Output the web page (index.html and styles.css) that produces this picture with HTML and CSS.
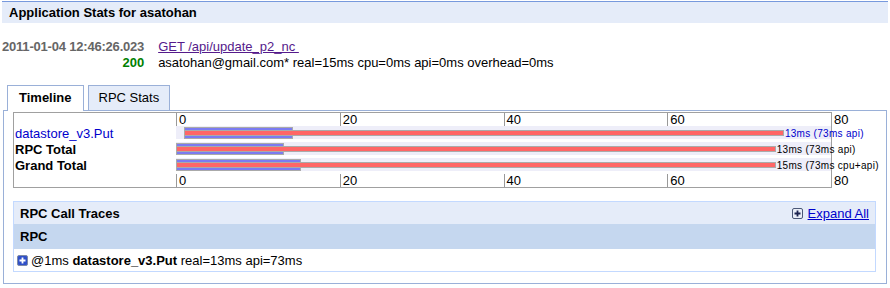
FILE: index.html
```html
<!DOCTYPE html>
<html lang="en">
<head>
  <meta charset="UTF-8">
  <meta name="viewport" content="width=device-width, initial-scale=1.0">
  <title>Application Stats</title>
  <link rel="stylesheet" href="styles.css">
</head>
<body>

<div class="page-title">Application Stats for asatohan</div>

<table class="request">
  <tr>
    <td class="req-time">2011-01-04 12:46:26.023</td>
    <td><a href="#" class="req-link">GET /api/update_p2_nc&nbsp;</a></td>
  </tr>
  <tr>
    <td class="req-status">200</td>
    <td>asatohan@gmail.com* real=15ms cpu=0ms api=0ms overhead=0ms</td>
  </tr>
</table>

<div class="tabs">
  <div class="tab selected">Timeline</div>
  <div class="tab">RPC Stats</div>
</div>

<div class="tab-panel">
  <div class="gantt">
    <div class="g-row axis-row">
      <div class="g-label"></div>
      <div class="g-chart">
        <span class="tick" style="left:0%">0</span>
        <span class="tick" style="left:25%">20</span>
        <span class="tick" style="left:50%">40</span>
        <span class="tick" style="left:75%">60</span>
        <span class="tick last" style="left:100%">80</span>
      </div>
    </div>

    <div class="g-row">
      <div class="g-label"><span class="rpc-name">datastore_v3.Put</span></div>
      <div class="g-chart">
        <div class="track">
          <div class="bar-real" style="left:1.25%;width:16.25%"></div>
          <div class="bar-api" style="left:1.25%;width:91.25%"></div>
          <span class="bar-text blue" style="left:92.5%">13ms (73ms api)</span>
        </div>
      </div>
    </div>

    <div class="g-row">
      <div class="g-label total">RPC Total</div>
      <div class="g-chart">
        <div class="track">
          <div class="bar-real" style="left:0%;width:16.25%"></div>
          <div class="bar-api" style="left:0%;width:91.25%"></div>
          <span class="bar-text" style="left:91.25%">13ms (73ms api)</span>
        </div>
      </div>
    </div>

    <div class="g-row">
      <div class="g-label total">Grand Total</div>
      <div class="g-chart">
        <div class="track">
          <div class="bar-real" style="left:0%;width:18.75%"></div>
          <div class="bar-api" style="left:0%;width:91.25%"></div>
          <span class="bar-text" style="left:91.25%">15ms (73ms cpu+api)</span>
        </div>
      </div>
    </div>

    <div class="g-row axis-row">
      <div class="g-label"></div>
      <div class="g-chart">
        <span class="tick" style="left:0%">0</span>
        <span class="tick" style="left:25%">20</span>
        <span class="tick" style="left:50%">40</span>
        <span class="tick" style="left:75%">60</span>
        <span class="tick last" style="left:100%">80</span>
      </div>
    </div>
  </div>

  <div class="traces">
    <div class="traces-head">
      <span>RPC Call Traces</span>
      <a href="#" class="expand-all">
        <svg class="plus-icon" width="11" height="11" viewBox="0 0 11 11">
          <rect x="0.5" y="0.5" width="10" height="10" rx="1.5" fill="#e9eef8" stroke="#4b5877"/>
          <path d="M2.5 5.5h6M5.5 2.5v6" stroke="#1c2450" stroke-width="1.8"/>
        </svg>
        <span>Expand All</span>
      </a>
    </div>
    <div class="traces-cols">RPC</div>
    <div class="trace-row">
      <svg class="plus-icon" width="11" height="11" viewBox="0 0 11 11">
        <rect x="0.5" y="0.5" width="10" height="10" rx="1.5" fill="#3050c8" stroke="#7d8aa8"/>
        <path d="M2.5 5.5h6M5.5 2.5v6" stroke="#fff" stroke-width="1.8"/>
      </svg>
      <span>@1ms <b>datastore_v3.Put</b> real=13ms api=73ms</span>
    </div>
  </div>
</div>

</body>
</html>
```

FILE: styles.css
```css
body {
  margin: 0;
  padding: 1px 2px 0;
  font-family: "Liberation Sans", Arial, sans-serif;
  font-size: 13px;
  color: #000;
  background-color: #fff;
}
.page-title {
  border-top: 1px solid #7799dd;
  background-color: #e5ecf9;
  font-weight: bold;
  height: 21px;
  line-height: 21px;
  padding: 0 7px;
}
.request {
  border-collapse: collapse;
  margin-top: 16px;
}
.request td {
  padding: 0;
  line-height: 16px;
  white-space: nowrap;
}
.req-time,
.req-status {
  text-align: right;
  font-weight: bold;
  padding-right: 14px !important;
}
.req-time {
  color: #666;
  letter-spacing: -0.2px;
}
.req-status {
  color: #008000;
}
.req-link {
  color: #551a8b;
}
.tabs {
  display: flex;
  gap: 4px;
  margin: 14px 0 0 5px;
}
.tab {
  height: 24px;
  line-height: 24px;
  padding: 0 10px;
  text-align: center;
  border: 1px solid #9ab0d8;
  border-bottom: none;
  background-color: #e5ecf9;
}
.tab.selected {
  background-color: #fff;
  font-weight: bold;
  padding: 0 11px;
  height: 25px;
  margin-bottom: -1px;
  position: relative;
  z-index: 1;
}
.tab-panel {
  border: 1px solid #9ab0d8;
  margin: 0 1px;
  padding: 1px 10px 11px 9px;
}
.gantt {
  width: 817px;
  border: 1px solid #a0a0a0;
}
.g-row {
  display: flex;
  height: 16px;
}
.g-row.axis-row {
  height: 13px;
}
.g-label {
  width: 162px;
  padding-left: 1px;
  box-sizing: border-box;
  line-height: 16px;
  white-space: nowrap;
}
.g-label.total {
  font-weight: bold;
}
.rpc-name {
  color: #0000cc;
}
.g-chart {
  width: 655px;
  position: relative;
}
.tick {
  position: absolute;
  top: 0;
  height: 13px;
  line-height: 14px;
  padding-left: 2px;
  border-left: 1px solid #999;
}
.tick.last {
  border-left-color: transparent;
}
.track {
  position: relative;
  height: 13px;
  background-color: #eeeef9;
}
.bar-real {
  position: absolute;
  top: 1px;
  height: 10px;
  border: 1px solid #aaa;
  background-color: #7b7bf2;
}
.bar-api {
  position: absolute;
  top: 4px;
  height: 4px;
  border: 1px solid #aaa;
  background-color: #ff6666;
}
.bar-text {
  position: absolute;
  top: 0;
  margin-left: 3px;
  font-size: 10px;
  letter-spacing: 0.3px;
  line-height: 16px;
  white-space: nowrap;
}
.bar-text.blue {
  color: #0000cc;
}
.traces {
  margin-top: 13px;
  border: 1px solid #c3d9ff;
}
.traces-head {
  display: flex;
  justify-content: space-between;
  align-items: center;
  height: 22px;
  padding: 0 6px 0 6px;
  background-color: #e5ecf9;
  font-weight: bold;
}
.expand-all {
  display: flex;
  align-items: center;
  gap: 5px;
  font-weight: normal;
  color: #0000cc;
}
.traces-cols {
  height: 25px;
  line-height: 25px;
  padding-left: 6px;
  background-color: #c5d7ef;
  font-weight: bold;
}
.trace-row {
  display: flex;
  align-items: center;
  gap: 3px;
  height: 22px;
  padding-left: 3px;
}
.plus-icon {
  display: block;
}
```
